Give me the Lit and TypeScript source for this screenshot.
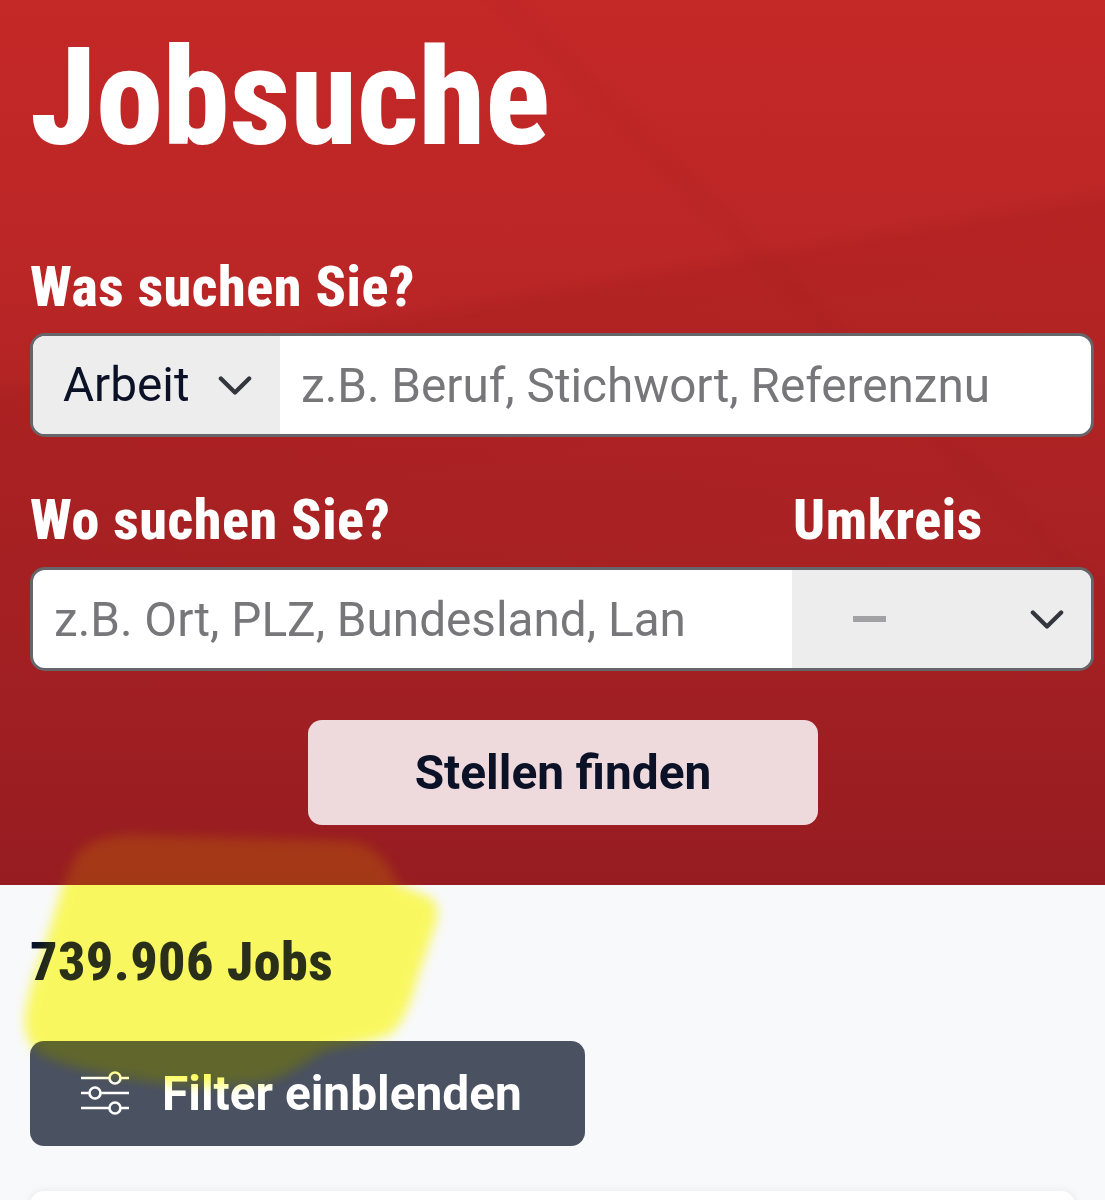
import { css, html, LitElement, svg } from "lit";
import { customElement } from "lit/decorators.js";

const BLOB =
  "M76 856 C86 842 105 835 133 835 L345 841 C372 843 390 860 397 884 L426 896 C438 901 439 912 435 925 L418 975 C410 1005 403 1022 390 1034 C370 1042 345 1045 325 1050 C300 1065 285 1078 262 1082 C220 1088 170 1086 130 1078 C90 1072 50 1062 36 1050 C26 1040 24 1025 26 1012 C30 990 36 970 43 953 C50 930 58 905 63 885 Z";

const chevron = svg`<path d="M2 3 L12 13 L22 3" fill="none" stroke="#33363d" stroke-width="3" stroke-linecap="round" stroke-linejoin="round"></path>`;

@customElement("app-root")
export default class AppRoot extends LitElement {
  static styles = css`
    :host {
      display: block;
      position: relative;
      height: 1200px;
      overflow: hidden;
      background: #f8f9fb;
      font-family: Roboto, "Liberation Sans", sans-serif;
      color: #0b1227;
    }

    .hero {
      height: 885px;
      box-sizing: border-box;
      padding: 0 11px 0 30px;
      background:
        linear-gradient(45deg, rgba(90, 0, 0, 0) 960px, rgba(90, 0, 0, 0.035) 980px, rgba(90, 0, 0, 0) 1005px),
        linear-gradient(170deg, rgba(90, 0, 0, 0) 372px, rgba(90, 0, 0, 0.08) 392px, rgba(90, 0, 0, 0) 720px),
        linear-gradient(#c42827 0, #bb2626 270px, #ab2224 520px, #961c21 885px);
    }

    .title,
    .label,
    .count {
      display: block;
      font-weight: 800;
      font-stretch: 75%;
      white-space: nowrap;
    }

    .title {
      margin: 0;
      padding-top: 31px;
      height: 199px;
      box-sizing: border-box;
      font-size: 134.5px;
      line-height: 135px;
      color: #fff;
    }

    .label {
      font-size: 56px;
      line-height: 60px;
      color: #fff;
      letter-spacing: 0.55px;
    }

    .what {
      padding-top: 58px;
      height: 76px;
      margin-bottom: 0;
    }

    .field {
      display: flex;
      height: 104px;
      box-sizing: border-box;
      border: 3px solid #65656a;
      border-radius: 15px;
      overflow: hidden;
      background: #fff;
    }

    .select {
      display: flex;
      align-items: center;
      background: #ededee;
      box-sizing: border-box;
    }

    .kind {
      width: 247px;
      padding-left: 30px;
      font-size: 47.7px;
    }

    .kind svg {
      margin-left: 28px;
    }

    .radius {
      width: 299px;
      padding-left: 61px;
    }

    .dash {
      width: 33px;
      height: 6px;
      background: #a2a2a4;
    }

    .radius svg {
      margin-left: 144px;
    }

    .input {
      flex: 1;
      min-width: 0;
      border: none;
      outline: none;
      background: transparent;
      font: 400 47.7px Roboto, "Liberation Sans", sans-serif;
      padding: 2px 0 0;
    }

    .input::placeholder {
      color: #77777a;
      opacity: 1;
    }

    .what-input {
      margin: 0 103px 0 21px;
    }

    .where-input {
      margin: 0 104px 0 21px;
    }

    .labels {
      display: flex;
      justify-content: space-between;
      padding-top: 53px;
      height: 77px;
    }

    .labels .label:last-child {
      width: 301px;
    }

    .submit-row {
      display: flex;
      justify-content: center;
      padding: 49px 0 0 0;
      margin-left: 2px;
    }

    .btn {
      display: flex;
      align-items: center;
      border: none;
      border-radius: 14px;
      height: 105px;
      box-sizing: border-box;
      font: 700 47.8px Roboto, "Liberation Sans", sans-serif;
      padding: 0;
    }

    .submit {
      width: 510px;
      justify-content: center;
      background: #eed9dc;
      color: #0b1227;
    }

    .results {
      padding: 44px 30px 0;
    }

    .count {
      font-size: 54px;
      line-height: 66px;
      letter-spacing: 0.45px;
      color: #0b1227;
    }

    .filter {
      margin-top: 46px;
      width: 555px;
      background: #4a5161;
      color: #fff;
      padding-left: 50px;
      gap: 32px;
    }

    .card {
      margin-top: 45px;
      height: 100px;
      background: #fff;
      border-radius: 14px;
      box-shadow: 0 0 8px rgba(30, 40, 60, 0.08);
    }

    .blob {
      position: absolute;
      left: 0;
      top: 0;
      width: 1105px;
      height: 1200px;
      pointer-events: none;
    }

    .multiply {
      mix-blend-mode: multiply;
    }

    .tint {
      opacity: 0.12;
    }
  `;

  renderBlob(cls: string, id: string) {
    return html`<svg class="blob ${cls}" viewBox="0 0 1105 1200">
      <defs>
        <filter id="${id}" x="-10%" y="-10%" width="120%" height="120%">
          <feGaussianBlur stdDeviation="6"></feGaussianBlur>
        </filter>
      </defs>
      <path d="${BLOB}" fill="#fffd60" filter="url(#${id})"></path>
    </svg>`;
  }

  render() {
    return html`
      <section class="hero">
        <h1 class="title">Jobsuche</h1>
        <span class="label what">Was suchen Sie?</span>
        <div class="field">
          <div class="select kind">
            Arbeit
            <svg width="34" height="23" viewBox="0 0 24 16">${chevron}</svg>
          </div>
          <input class="input what-input" placeholder="z.B. Beruf, Stichwort, Referenznummer" />
        </div>
        <div class="labels">
          <span class="label">Wo suchen Sie?</span>
          <span class="label">Umkreis</span>
        </div>
        <div class="field">
          <input class="input where-input" placeholder="z.B. Ort, PLZ, Bundesland, Land" />
          <div class="select radius">
            <span class="dash"></span>
            <svg width="34" height="23" viewBox="0 0 24 16">${chevron}</svg>
          </div>
        </div>
        <div class="submit-row">
          <button class="btn submit" type="button">Stellen finden</button>
        </div>
      </section>
      <section class="results">
        <span class="count">739.906 Jobs</span>
        <button class="btn filter" type="button">
          <svg width="50" height="46" viewBox="0 0 50 46" fill="none" stroke="#fff" stroke-width="2.6">
            <path d="M1 7 H29.5 M40.5 7 H49 M1 22 H9.5 M20.5 22 H49 M1 37 H29.5 M40.5 37 H49"></path>
            <circle cx="35" cy="7" r="5.5"></circle>
            <circle cx="15" cy="22" r="5.5"></circle>
            <circle cx="35" cy="37" r="5.5"></circle>
          </svg>
          Filter einblenden
        </button>
        <div class="card"></div>
      </section>
      ${this.renderBlob("multiply", "b1")} ${this.renderBlob("tint", "b2")}
    `;
  }
}
